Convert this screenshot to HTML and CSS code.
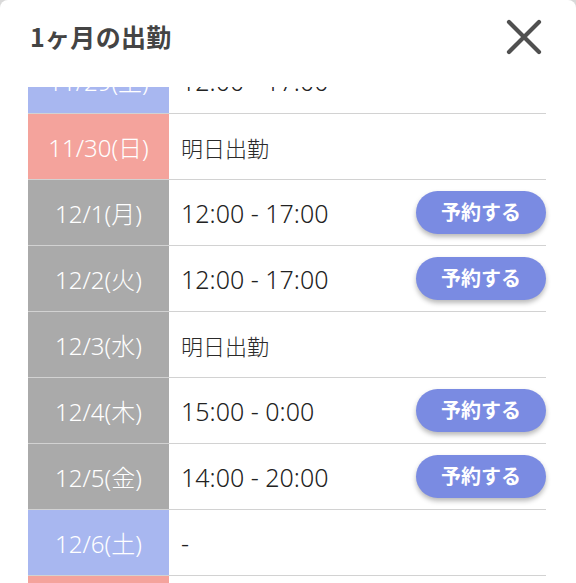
FILE: index.html
```html
<!DOCTYPE html>
<html lang="ja">
<head>
<meta charset="utf-8">
<link rel="stylesheet" href="styles.css">
</head>
<body>
<div class="modal">
  <header class="head">
    <h1 class="title">1ヶ月の出勤</h1>
    <button class="close" aria-label="閉じる">
      <svg width="36" height="36" viewBox="0 0 36 36"><path d="M3 3 L33 33 M33 3 L3 33" stroke="#505050" stroke-width="4.2" stroke-linecap="round" fill="none"/></svg>
    </button>
  </header>
  <div class="viewport">
    <div class="list">
      <div class="row"><div class="date sat">11/29(土)</div><div class="info"><span class="text">12:00 - 17:00</span></div></div>
      <div class="row"><div class="date sun">11/30(日)</div><div class="info"><span class="text jp">明日出勤</span></div></div>
      <div class="row"><div class="date wk">12/1(月)</div><div class="info"><span class="text">12:00 - 17:00</span><button class="reserve">予約する</button></div></div>
      <div class="row"><div class="date wk">12/2(火)</div><div class="info"><span class="text">12:00 - 17:00</span><button class="reserve">予約する</button></div></div>
      <div class="row"><div class="date wk">12/3(水)</div><div class="info"><span class="text jp">明日出勤</span></div></div>
      <div class="row"><div class="date wk">12/4(木)</div><div class="info"><span class="text">15:00 - 0:00</span><button class="reserve">予約する</button></div></div>
      <div class="row"><div class="date wk">12/5(金)</div><div class="info"><span class="text">14:00 - 20:00</span><button class="reserve">予約する</button></div></div>
      <div class="row"><div class="date sat">12/6(土)</div><div class="info"><span class="text">-</span></div></div>
      <div class="row"><div class="date sun">12/7(日)</div><div class="info"><span class="text">-</span></div></div>
    </div>
  </div>
</div>
</body>
</html>
```
FILE: styles.css
```css
html, body {
  margin: 0;
  padding: 0;
  background: #d9d9d9;
}
.modal {
  width: 576px;
  height: 583px;
  background: #fff;
  border-radius: 8px 8px 0 0;
  overflow: hidden;
  font-family: "Noto Sans", "Noto Sans CJK JP", sans-serif;
}
.head {
  height: 87px;
  box-sizing: border-box;
  padding: 0 34px 0 30px;
  display: flex;
  align-items: center;
  justify-content: space-between;
}
.title {
  margin: 0 0 16px 0;
  font-family: "Noto Sans CJK JP", sans-serif;
  font-size: 25px;
  font-weight: 700;
  color: #444;
  letter-spacing: 0.3px;
}
.close {
  border: 0;
  background: none;
  padding: 0;
  margin-bottom: 13px;
  width: 36px;
  height: 36px;
  display: block;
}
.close svg { display: block; }
.viewport {
  height: 496px;
  overflow: hidden;
  padding: 0 30px 0 28px;
}
.list {
  margin-top: -39px;
}
.row {
  display: flex;
  height: 66px;
  box-sizing: border-box;
  border-bottom: 1px solid #d2d2d2;
}
.date {
  width: 141px;
  flex: none;
  display: flex;
  align-items: center;
  justify-content: center;
  color: #fff;
  font-family: "Noto Sans", "Noto Sans CJK JP", sans-serif;
  font-weight: 300;
  font-size: 24px;
}
.sat { background: #a8b7f0; }
.sun { background: #f4a39c; }
.wk { background: #aaaaaa; }
.info {
  flex: 1;
  display: flex;
  align-items: center;
  justify-content: space-between;
  padding-left: 12px;
  color: #222;
}
.text {
  font-family: "Noto Sans", "Noto Sans CJK JP", sans-serif;
  font-weight: 300;
  font-size: 25px;
}
.text.jp {
  font-family: "Noto Sans CJK JP", sans-serif;
  font-size: 22px;
  font-weight: 300;
  color: #2a2a2a;
}
.reserve {
  width: 130px;
  height: 43px;
  border: 0;
  border-radius: 22px;
  background: #7a8be2;
  color: #fff;
  font-family: "Noto Sans CJK JP", sans-serif;
  font-weight: 700;
  font-size: 20px;
  box-shadow: 0 3px 5px rgba(0, 0, 0, 0.28);
  padding: 0 0 2px 0;
}
```
